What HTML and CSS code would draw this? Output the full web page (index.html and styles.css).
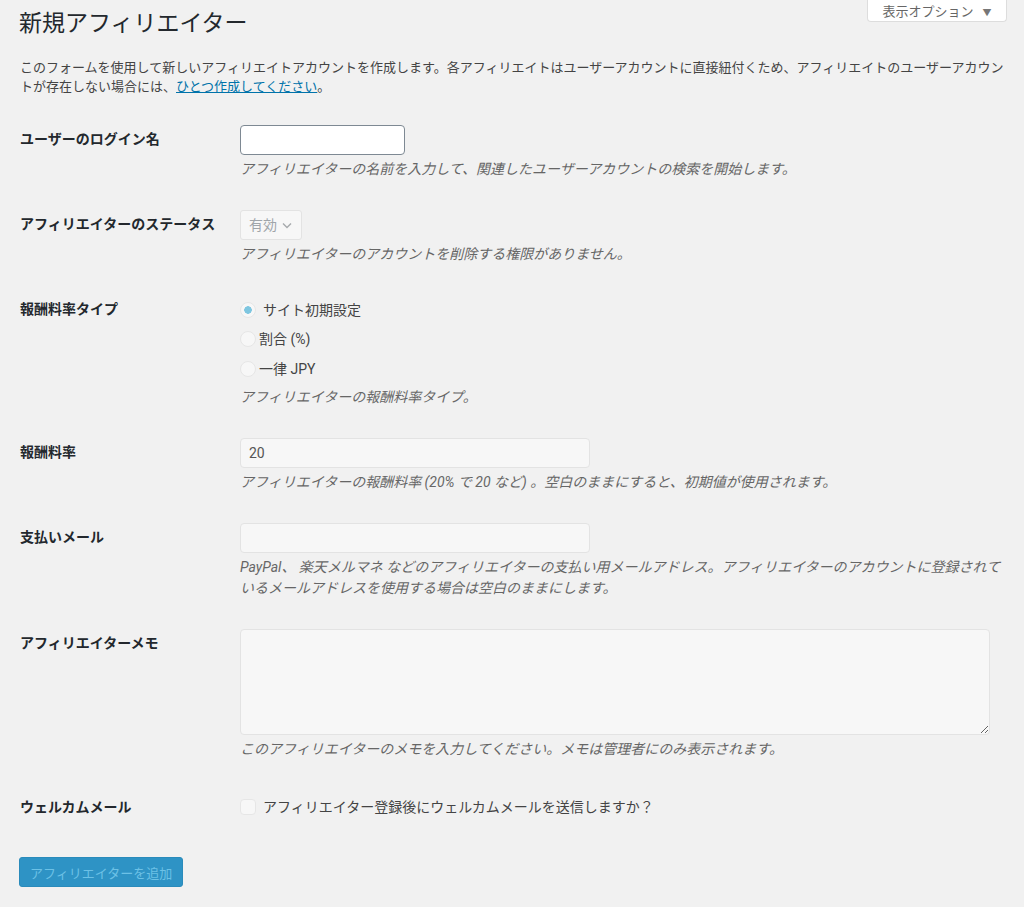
FILE: index.html
```html
<!DOCTYPE html>
<html lang="ja">
<head>
  <meta charset="UTF-8">
  <title>新規アフィリエイター</title>
  <link rel="stylesheet" href="styles.css">
</head>
<body>
  <div class="screen-meta-links">
    <button type="button" class="screen-options">表示オプション <span class="arrow">▼</span></button>
  </div>

  <div class="wrap">
    <h1>新規アフィリエイター</h1>

    <p class="intro">このフォームを使用して新しいアフィリエイトアカウントを作成します。各アフィリエイトはユーザーアカウントに直接紐付くため、アフィリエイトのユーザーアカウントが存在しない場合には、<a href="#">ひとつ作成してください</a>。</p>

    <form>
      <table class="form-table">
        <tr>
          <th>ユーザーのログイン名</th>
          <td>
            <input type="text" class="login-input">
            <p class="description">アフィリエイターの名前を入力して、関連したユーザーアカウントの検索を開始します。</p>
          </td>
        </tr>
        <tr>
          <th>アフィリエイターのステータス</th>
          <td>
            <span class="select-box">
              有効
              <svg class="chevron" width="12" height="12" viewBox="0 0 12 12"><path d="M2 4.5 L6 8.5 L10 4.5" fill="none" stroke="#a7aaad" stroke-width="1.4"/></svg>
            </span>
            <p class="description">アフィリエイターのアカウントを削除する権限がありません。</p>
          </td>
        </tr>
        <tr>
          <th>報酬料率タイプ</th>
          <td>
            <label class="radio-row"><input type="radio" name="rate_type" checked disabled><span class="spaced">サイト初期設定</span></label>
            <label class="radio-row"><input type="radio" name="rate_type" disabled><span>割合 (%)</span></label>
            <label class="radio-row"><input type="radio" name="rate_type" disabled><span>一律 JPY</span></label>
            <p class="description">アフィリエイターの報酬料率タイプ。</p>
          </td>
        </tr>
        <tr>
          <th>報酬料率</th>
          <td>
            <input type="text" class="regular-text" value="20" disabled>
            <p class="description">アフィリエイターの報酬料率 (20% で 20 など) 。空白のままにすると、初期値が使用されます。</p>
          </td>
        </tr>
        <tr>
          <th>支払いメール</th>
          <td>
            <input type="text" class="regular-text" disabled>
            <p class="description">PayPal、 楽天メルマネ などのアフィリエイターの支払い用メールアドレス。アフィリエイターのアカウントに登録されているメールアドレスを使用する場合は空白のままにします。</p>
          </td>
        </tr>
        <tr>
          <th>アフィリエイターメモ</th>
          <td>
            <textarea class="large-text" disabled></textarea>
            <p class="description">このアフィリエイターのメモを入力してください。メモは管理者にのみ表示されます。</p>
          </td>
        </tr>
        <tr>
          <th class="check-label">ウェルカムメール</th>
          <td>
            <label class="check-row"><input type="checkbox" disabled><span>アフィリエイター登録後にウェルカムメールを送信しますか？</span></label>
          </td>
        </tr>
      </table>

      <p class="submit">
        <button type="button" class="button-primary" disabled>アフィリエイターを追加</button>
      </p>
    </form>
  </div>
</body>
</html>
```

FILE: styles.css
```css
body {
  margin: 0;
  background: #f1f1f1;
  color: #444;
  font-family: Roboto, "Noto Sans CJK JP", sans-serif;
  font-size: 13px;
}

.screen-meta-links {
  float: right;
  margin-right: 17px;
}

.screen-options {
  display: block;
  width: 140px;
  height: 23px;
  margin-top: -1px;
  padding: 0;
  background: #fff;
  border: 1px solid #ddd;
  border-top: none;
  border-radius: 0 0 4px 4px;
  color: #666;
  font-family: inherit;
  font-size: 13px;
}

.screen-options .arrow {
  font-size: 9px;
  margin-left: 6px;
  color: #777;
}

.wrap {
  margin: 0 16px 0 20px;
}

h1 {
  margin: 0 0 0 -1px;
  padding: 9px 0 4px;
  font-size: 23px;
  font-weight: 400;
  line-height: 1.3;
  color: #23282d;
}

.intro {
  margin: 15px 0 13px;
  line-height: 1.5;
}

.intro a {
  color: #0073aa;
}

.form-table {
  width: 100%;
  table-layout: fixed;
  border-collapse: collapse;
}

.form-table th {
  width: 200px;
  padding: 20px 10px 20px 0;
  text-align: left;
  vertical-align: top;
  font-size: 14px;
  font-weight: 700;
  line-height: 1.3;
  color: #23282d;
}

.form-table th.check-label {
  padding-top: 23px;
}

.form-table td {
  padding: 15px 0 15px 10px;
  vertical-align: top;
  font-size: 14px;
  line-height: 1.3;
}

input[type="text"],
textarea {
  display: block;
  box-sizing: border-box;
  height: 30px;
  margin: 0;
  padding: 0 8px;
  font-family: inherit;
  font-size: 14px;
  color: #444;
  border-radius: 4px;
}

.login-input {
  width: 165px;
  background: #fff;
  border: 1px solid #7e8993;
}

.regular-text {
  width: 350px;
  background: #f7f7f7;
  border: 1px solid #e3e3e3;
}

.regular-text:disabled {
  color: #555;
}

textarea.large-text {
  width: 750px;
  height: 106px;
  background: #f7f7f7;
  border: 1px solid #e3e3e3;
  resize: vertical;
}

.description {
  margin: 4px 0 0;
  font-size: 14px;
  font-style: italic;
  line-height: 1.5;
  color: #666;
}

.select-box {
  display: flex;
  align-items: center;
  box-sizing: border-box;
  width: 62px;
  height: 30px;
  padding: 0 8px;
  background: #f7f7f7;
  border: 1px solid #e3e3e3;
  border-radius: 3px;
  color: #a0a5aa;
  font-size: 14px;
}

.select-box .chevron {
  margin-left: 4px;
}

.radio-row {
  display: flex;
  align-items: center;
  height: 29.5px;
  color: #444;
}

.radio-row input {
  appearance: none;
  box-sizing: border-box;
  width: 16px;
  height: 16px;
  margin: 0 3px 0 0;
  border: 1px solid #e6e6e6;
  border-radius: 50%;
  background: #f7f7f7;
}

.radio-row input:checked {
  background: radial-gradient(circle, #7ec6e0 0 3.5px, #f7f7f7 4px);
}

.radio-row .spaced {
  margin-left: 4px;
}

.check-row {
  display: flex;
  align-items: center;
  height: 34px;
  color: #444;
}

.check-row input {
  appearance: none;
  box-sizing: border-box;
  width: 16px;
  height: 16px;
  margin: 0 7px 0 0;
  border: 1px solid #e6e6e6;
  border-radius: 4px;
  background: #f7f7f7;
}

.submit {
  margin: 18px 0 0;
  padding: 0;
}

.button-primary {
  height: 30px;
  padding: 0 10px;
  margin-left: -1px;
  background: #2e93c5;
  border: 1px solid #2a8bbb;
  border-radius: 3px;
  color: #6cc1e6;
  font-family: inherit;
  font-size: 13px;
}
```
